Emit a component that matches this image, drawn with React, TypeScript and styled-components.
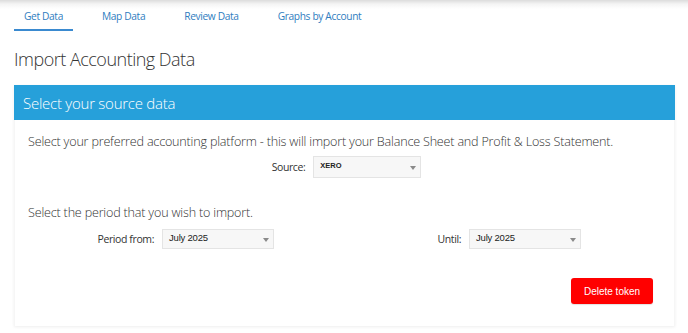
import React from "react";
import styled, { createGlobalStyle } from "styled-components";

const Global = createGlobalStyle`
  html, body { margin: 0; padding: 0; }
  body {
    background: linear-gradient(to bottom, #dcdcdc 0px, #f4f4f4 4px, #ffffff 9px) no-repeat #ffffff;
    font-family: "Open Sans", "Liberation Sans", sans-serif;
    color: #333;
    width: 688px;
    height: 333px;
    overflow: hidden;
  }
`;

const Page = styled.div`
  padding: 0 13px 0 14px;
`;

const Tabs = styled.nav`
  display: flex;
  height: 31px;
`;

const Tab = styled.a<{ $active?: boolean }>`
  display: flex;
  align-items: center;
  box-sizing: border-box;
  padding: 2px 10px 0 10px;
  margin-right: 19px;
  font-size: 10.2px;
  letter-spacing: -0.35px;
  color: #2f7dc0;
  text-decoration: none;
  border-bottom: 2px solid ${(p) => (p.$active ? "#3a8ad0" : "transparent")};
  height: 31px;
`;

const Heading = styled.h1`
  margin: 17px 0 15px 0;
  font-size: 18px;
  font-weight: 300;
  line-height: 22px;
  letter-spacing: -0.5px;
  color: #333;
`;

const Panel = styled.section`
  box-shadow: 0 1px 3px rgba(0, 0, 0, 0.07);
  background: #fff;
`;

const PanelHeader = styled.div`
  background: #26a0da;
  height: 35px;
  display: flex;
  align-items: center;
  padding-left: 9px;
  color: #fff;
  font-size: 15px;
  font-weight: 300;
  letter-spacing: -0.25px;
`;

const PanelBody = styled.div`
  padding: 13px 13px 22px 13px;
  border-left: 1px solid #f6f6f6;
  border-right: 1px solid #f6f6f6;
`;

const Lead = styled.p<{ $top?: number }>`
  margin: ${(p) => p.$top ?? 0}px 0 0 0;
  font-size: 12.6px;
  font-weight: 300;
  line-height: 18px;
  letter-spacing: -0.2px;
  color: #333;
`;

const CenterRow = styled.div`
  display: flex;
  justify-content: center;
  align-items: center;
  gap: 8px;
  margin-top: 5px;
  padding-left: 4px;
`;

const Label = styled.label`
  font-size: 10.5px;
  letter-spacing: -0.4px;
  color: #333;
`;

const SelectBox = styled.div<{ $w: number; $h: number; $bold?: boolean }>`
  box-sizing: border-box;
  width: ${(p) => p.$w}px;
  height: ${(p) => p.$h}px;
  background: #f7f7f7;
  border: 1px solid #e4e4e4;
  display: flex;
  align-items: center;
  justify-content: space-between;
  padding: 0 4px 3px 6px;
  font-family: "Liberation Sans", Arial, sans-serif;
  font-size: ${(p) => (p.$bold ? "7.5px" : "9.5px")};
  font-weight: ${(p) => (p.$bold ? 700 : 400)};
  letter-spacing: ${(p) => (p.$bold ? "0" : "-0.2px")};
  color: #222;
`;

const Caret = styled.span`
  width: 0;
  height: 0;
  border-left: 3.5px solid transparent;
  border-right: 3.5px solid transparent;
  border-top: 4px solid #8a8a8a;
  margin-top: 5px;
`;

const PeriodGrid = styled.div`
  display: grid;
  grid-template-columns: 307px 307px;
  margin-top: 7px;
`;

const Field = styled.div`
  display: grid;
  grid-template-columns: 126px auto;
  column-gap: 8px;
  align-items: center;
  justify-items: end;
  & > :last-child { justify-self: start; }
`;

const Actions = styled.div`
  display: flex;
  justify-content: flex-end;
  margin-top: 29px;
  padding-right: 8px;
`;

const DangerButton = styled.button`
  width: 82px;
  height: 26px;
  background: #ff0000;
  color: #fff;
  border: none;
  border-radius: 3px;
  font-family: "Liberation Sans", Arial, sans-serif;
  font-size: 10px;
  box-shadow: 0 1px 1px rgba(0, 0, 0, 0.12);
  padding: 0;
`;

function Select({ value, w, h, bold }: { value: string; w: number; h: number; bold?: boolean }) {
  return (
    <SelectBox $w={w} $h={h} $bold={bold}>
      <span>{value}</span>
      <Caret />
    </SelectBox>
  );
}

export default function App() {
  return (
    <>
      <Global />
      <Page>
        <Tabs>
          <Tab $active>Get Data</Tab>
          <Tab>Map Data</Tab>
          <Tab>Review Data</Tab>
          <Tab>Graphs by Account</Tab>
        </Tabs>
        <Heading>Import Accounting Data</Heading>
        <Panel>
          <PanelHeader>Select your source data</PanelHeader>
          <PanelBody>
            <Lead>
              Select your preferred accounting platform - this will import your Balance Sheet and Profit &amp; Loss Statement.
            </Lead>
            <CenterRow>
              <Label>Source:</Label>
              <Select value="XERO" w={108} h={22} bold />
            </CenterRow>
            <Lead $top={26}>Select the period that you wish to import.</Lead>
            <PeriodGrid>
              <Field>
                <Label>Period from:</Label>
                <Select value="July 2025" w={112} h={20} />
              </Field>
              <Field>
                <Label>Until:</Label>
                <Select value="July 2025" w={112} h={20} />
              </Field>
            </PeriodGrid>
            <Actions>
              <DangerButton>Delete token</DangerButton>
            </Actions>
          </PanelBody>
        </Panel>
      </Page>
    </>
  );
}
